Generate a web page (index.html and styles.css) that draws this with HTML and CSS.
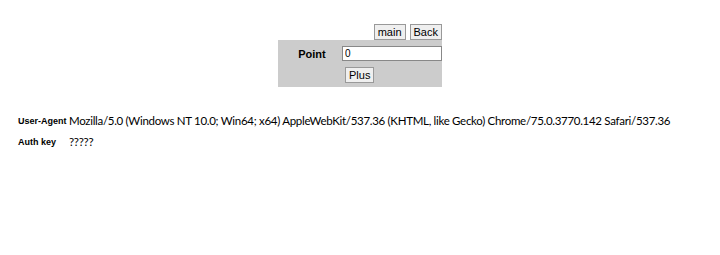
FILE: index.html
```html
<!DOCTYPE html>
<html lang="ko">
<head>
    <meta charset="UTF-8">
    <title>Point</title>
    <link rel="stylesheet" href="styles.css">
</head>
<body>
    <div class="top">
        <div class="nav">
            <button type="button">main</button>
            <button type="button">Back</button>
        </div>
        <form class="point-form">
            <div class="row">
                <label for="point">Point</label>
                <input type="text" id="point" value="0">
            </div>
            <div class="row">
                <span></span>
                <div><button type="submit">Plus</button></div>
            </div>
        </form>
    </div>

    <div class="info">
        <div class="info-label">User-Agent</div>
        <div class="info-value">Mozilla/5.0 (Windows NT 10.0; Win64; x64) AppleWebKit/537.36 (KHTML, like Gecko) Chrome/75.0.3770.142 Safari/537.36</div>
        <div class="info-label">Auth key</div>
        <div class="info-value">?????</div>
    </div>
</body>
</html>
```

FILE: styles.css
```css
body {
    margin: 0;
    padding: 0;
    background: #fff;
    font-family: "Liberation Sans", Arial, sans-serif;
    font-size: 11px;
}
.top {
    width: 164px;
    margin: 24px auto 0;
}
.nav {
    display: flex;
    justify-content: flex-end;
    gap: 4px;
    height: 16px;
}
button {
    font-family: "Liberation Sans", Arial, sans-serif;
    font-size: 11px;
    padding: 0 3px;
    height: 16px;
    line-height: 14px;
    background: #efefef;
    border: 1px solid #999;
    border-radius: 0;
    color: #000;
}
.point-form {
    background: #cccccc;
    padding: 4px 0 3px;
}
.row {
    display: grid;
    grid-template-columns: 64px 100px;
    align-items: center;
    height: 19px;
}
.row + .row {
    margin-top: 2px;
}
.row label {
    font-weight: bold;
    text-align: center;
    padding-left: 4px;
}
.row input {
    width: 100px;
    height: 15px;
    box-sizing: border-box;
    border: 1px solid #888;
    font-family: "Liberation Sans", Arial, sans-serif;
    font-size: 10px;
    padding: 0 2px;
}
.row button {
    margin-left: 3px;
    padding: 0 3px;
}
.info {
    display: grid;
    grid-template-columns: 51px auto;
    row-gap: 5px;
    margin: 26px 0 0 18px;
    align-items: center;
}
.info-label {
    font-family: "Liberation Sans", Arial, sans-serif;
    font-weight: bold;
    font-size: 9px;
    white-space: nowrap;
}
.info-value {
    font-family: Lato, sans-serif;
    font-size: 11.5px;
    letter-spacing: -0.3px;
    line-height: 16px;
    white-space: nowrap;
}
```
